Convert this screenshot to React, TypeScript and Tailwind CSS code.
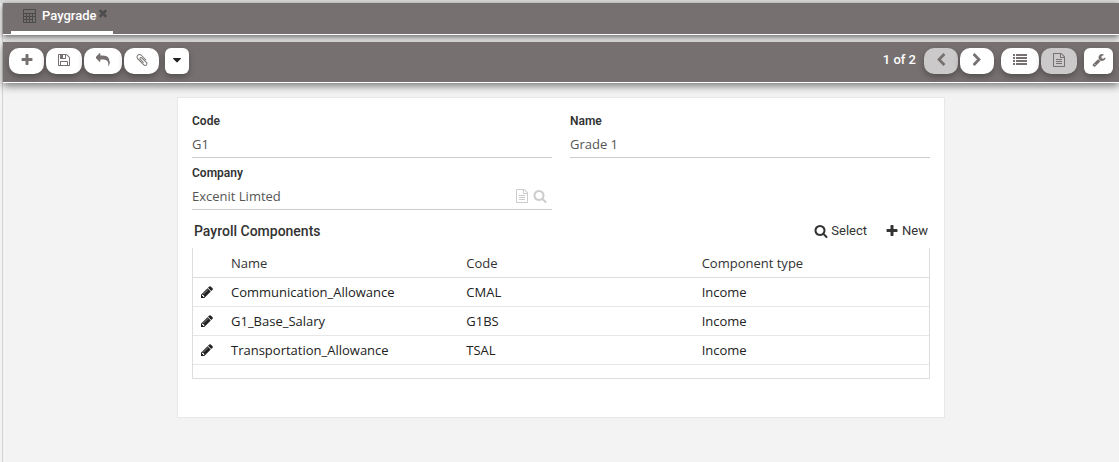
import React from "react";

const paths = {
  plus: "M1600 736v192q0 40-28 68t-68 28h-416v416q0 40-28 68t-68 28h-192q-40 0-68-28t-28-68v-416h-416q-40 0-68-28t-28-68v-192q0-40 28-68t68-28h416v-416q0-40 28-68t68-28h192q40 0 68 28t28 68v416h416q40 0 68 28t28 68z",
  search:
    "M1216 832q0-185-131.5-316.5t-316.5-131.5-316.5 131.5-131.5 316.5 131.5 316.5 316.5 131.5 316.5-131.5 131.5-316.5zm512 832q0 52-38 90t-90 38q-54 0-90-38l-343-342q-179 124-399 124-143 0-273.5-55.5t-225-150-150-225-55.5-273.5 55.5-273.5 150-225 225-150 273.5-55.5 273.5 55.5 225 150 150 225 55.5 273.5q0 220-124 399l343 343q37 37 37 90z",
  save: "M512 1536h768v-384h-768v384zm896 0h128v-896q0-14-10-38.5t-20-34.5l-281-281q-10-10-34-20t-39-10v416q0 40-28 68t-68 28h-576q-40 0-68-28t-28-68v-416h-128v1280h128v-416q0-40 28-68t68-28h832q40 0 68 28t28 68v416zm-384-928v-320q0-13-9.5-22.5t-22.5-9.5h-192q-13 0-22.5 9.5t-9.5 22.5v320q0 13 9.5 22.5t22.5 9.5h192q13 0 22.5-9.5t9.5-22.5zm640 32v928q0 40-28 68t-68 28h-1344q-40 0-68-28t-28-68v-1344q0-40 28-68t68-28h928q40 0 88 20t76 48l280 280q28 28 48 76t20 88z",
  pencil:
    "M491 1536l91-91-235-235-91 91v107h128v128h107zm523-928q0-22-22-22-10 0-17 7l-542 542q-7 7-7 17 0 22 22 22 10 0 17-7l542-542q7-7 7-17zm-54-192l416 416-832 832h-416v-416zm683 96q0 53-37 90l-166 166-416-416 166-165q36-38 90-38 53 0 91 38l235 234q37 39 37 91z",
  file: "M1596 380q28 28 48 76t20 88v1152q0 40-28 68t-68 28h-1344q-40 0-68-28t-28-68v-1600q0-40 28-68t68-28h896q40 0 88 20t76 48zm-444-244v376h376q-10-29-22-41l-313-313q-12-12-41-22zm384 1528v-1024h-416q-40 0-68-28t-28-68v-416h-768v1536h1280zm-1024-864q0-14 9-23t23-9h704q14 0 23 9t9 23v64q0 14-9 23t-23 9h-704q-14 0-23-9t-9-23v-64zm736 224q14 0 23 9t9 23v64q0 14-9 23t-23 9h-704q-14 0-23-9t-9-23v-64q0-14 9-23t23-9h704zm0 256q14 0 23 9t9 23v64q0 14-9 23t-23 9h-704q-14 0-23-9t-9-23v-64q0-14 9-23t23-9h704z",
  left: "M1427 301l-531 531 531 531q19 19 19 45t-19 45l-166 166q-19 19-45 19t-45-19l-742-742q-19-19-19-45t19-45l742-742q19-19 45-19t45 19l166 166q19 19 19 45t-19 45z",
  right:
    "M1363 877l-742 742q-19 19-45 19t-45-19l-166-166q-19-19-19-45t19-45l531-531-531-531q-19-19-19-45t19-45l166-166q19-19 45-19t45 19l742 742q19 19 19 45t-19 45z",
  close:
    "M1490 1322q0 40-28 68l-136 136q-28 28-68 28t-68-28l-294-294-294 294q-28 28-68 28t-68-28l-136-136q-28-28-28-68t28-68l294-294-294-294q-28-28-28-68t28-68l136-136q28-28 68-28t68 28l294 294 294-294q28-28 68-28t68 28l136 136q28 28 28 68t-28 68l-294 294 294 294q28 28 28 68z",
  wrench:
    "M448 1472q0-26-19-45t-45-19-45 19-19 45 19 45 45 19 45-19 19-45zm644-420l-682 682q-37 37-90 37-52 0-91-37l-106-108q-38-36-38-90 0-53 38-91l681-681q39 98 114.5 173.5t173.5 114.5zm634-435q0 39-23 106-47 134-164.5 217.5t-258.5 83.5q-185 0-316.5-131.5t-131.5-316.5 131.5-316.5 316.5-131.5q58 0 121.5 16.5t107.5 46.5q16 11 16 28t-16 28l-293 169v224l193 107q5-3 79-48.5t135.5-81 70.5-35.5q15 0 23.5 10t8.5 25z",
  reply:
    "M1792 1120q0 166-127 451-3 7-10.5 24t-13.5 30-13 22q-12 17-28 17-15 0-23.5-10t-8.5-25q0-9 2.5-26.5t2.5-23.5q5-68 5-123 0-112-19.5-200.5t-54-153.5-90-112-117.5-78-149-49.5-171.5-24.5-197.5-7h-224v256q0 26-19 45t-45 19-45-19l-512-512q-19-19-19-45t19-45l512-512q19-19 45-19t45 19 19 45v256h224q713 0 875 403 53 134 53 333z",
  clip: "M1596 1385q0 117-79 196t-196 79q-135 0-235-100l-777-776q-113-115-113-271 0-159 110-270t269-111q158 0 273 113l605 606q10 10 10 22 0 16-30.5 46.5t-46.5 30.5q-13 0-23-10l-606-607q-79-77-181-77-106 0-179 75t-73 181q0 105 76 181l776 777q63 63 145 63 64 0 106-42t42-106q0-82-63-145l-581-581q-26-24-60-24-29 0-48 19t-19 48q0 32 25 59l410 410q10 10 10 22 0 16-31 47t-47 31q-12 0-22-10l-410-410q-63-61-63-149 0-82 57-139t139-57q88 0 149 63l581 581q100 98 100 235z",
  list: "M0 128h256v256h-256zM384 128h1408v256h-1408zM0 512h256v256h-256zM384 512h1408v256h-1408zM0 896h256v256h-256zM384 896h1408v256h-1408zM0 1280h256v256h-256zM384 1280h1408v256h-1408z",
  caret: "M1408 704q0 26-19 45l-448 448q-19 19-45 19t-45-19l-448-448q-19-19-19-45t19-45 45-19h896q26 0 45 19t19 45z",
};

type IconName = keyof typeof paths;

function Icon({ name, className = "size-3.5" }: { name: IconName; className?: string }) {
  return (
    <svg viewBox="0 0 1792 1792" className={`${className} shrink-0`} fill="currentColor" aria-hidden="true">
      <path d={paths[name]} />
    </svg>
  );
}

function CalculatorIcon() {
  return (
    <svg viewBox="0 0 14 14" className="size-3.5 shrink-0" aria-hidden="true">
      <path
        fill="currentColor"
        fillRule="evenodd"
        d="M.8 0h11.4q.8 0 .8.8v12.4q0 .8-.8.8H.8q-.8 0-.8-.8V.8Q0 0 .8 0zM1 1v3h11V1zM1 5v2h2V5zM4 5v2h2V5zM7 5v2h2V5zM10 5v2h2V5zM1 8v2h2V8zM4 8v2h2V8zM7 8v2h2V8zM10 8v5h2V8zM1 11v2h2v-2zM4 11v2h2v-2zM7 11v2h2v-2z"
      />
    </svg>
  );
}

function ToolButton({
  icon,
  label,
  className,
}: {
  icon: IconName;
  label: string;
  className: string;
}) {
  return (
    <button
      type="button"
      aria-label={label}
      className={`flex h-[26px] items-center justify-center pb-0.5 shadow-[0_3px_6px_rgba(0,0,0,0.3)] ${className}`}
    >
      <Icon name={icon} />
    </button>
  );
}

function Field({ id, label, value, children }: { id: string; label: string; value: string; children?: React.ReactNode }) {
  return (
    <div className="flex h-[52px] flex-col">
      <label htmlFor={id} className="font-[Roboto,sans-serif] text-xs leading-5 font-semibold text-[#333]">
        {label}
      </label>
      <div className="flex h-[27px] items-center border-b border-[#ccc]">
        <input
          id={id}
          defaultValue={value}
          className="min-w-0 flex-1 bg-transparent text-[13px] leading-5 text-[#555] outline-none"
        />
        {children}
      </div>
    </div>
  );
}

const rows = [
  ["Communication_Allowance", "CMAL", "Income"],
  ["G1_Base_Salary", "G1BS", "Income"],
  ["Transportation_Allowance", "TSAL", "Income"],
];

export default function App() {
  return (
    <div className="min-h-screen bg-[#dcdcdc] pt-[3px] font-['Open_Sans',sans-serif]">
      <div className="min-h-[calc(100vh-3px)] border-l-2 border-[#f3f3f3] bg-[#f3f3f3]">
        <div className="min-h-[calc(100vh-3px)] border-l border-[#d2d2d2]">
          <nav className="flex h-8 border-b border-white bg-[#777070] px-2 shadow-[0_2px_6px_rgba(0,0,0,0.6)]">
            <div className="flex h-[31px] items-start border-b-3 border-white pr-1 pl-3">
              <a
                href="#paygrade"
                className="flex items-center pt-[3px] font-[Roboto,sans-serif] text-[13px] leading-5 font-medium text-white"
              >
                <span className="mr-[5px] text-[#4b4b4b]">
                  <CalculatorIcon />
                </span>
                Paygrade
              </a>
              <button type="button" aria-label="Close tab" className="mt-1 ml-px text-[#4b4b4b]">
                <Icon name="close" className="size-3" />
              </button>
            </div>
          </nav>
          <header className="mt-[7px] flex h-[41px] items-center border-b border-white bg-[#777070] px-1.5 pb-0.5 text-[#777070] shadow-[0_3px_8px_rgba(0,0,0,0.5)]">
            <div className="flex gap-0.5">
              <ToolButton icon="plus" label="New" className="w-[35px] rounded-[10px] bg-white" />
              <ToolButton icon="save" label="Save" className="w-9 rounded-[10px] bg-white" />
              <ToolButton icon="reply" label="Undo" className="w-[38px] rounded-[10px] bg-white" />
              <ToolButton icon="clip" label="Attach" className="w-[35px] rounded-[10px] bg-white" />
            </div>
            <ToolButton icon="caret" label="More" className="ml-1.5 w-6 rounded-md bg-white text-[#222]" />
            <span className="mr-2 ml-auto pb-0.5 font-[Roboto,sans-serif] text-[13px] leading-5 font-medium text-white">
              1 of 2
            </span>
            <div className="flex gap-0.5">
              <ToolButton icon="left" label="Previous" className="w-[34px] rounded-[10px] bg-[#cbc9c9]" />
              <ToolButton icon="right" label="Next" className="w-[34px] rounded-[10px] bg-white" />
            </div>
            <div className="ml-[7px] flex gap-0.5">
              <ToolButton icon="list" label="List view" className="w-[38px] rounded-[10px] bg-white" />
              <ToolButton icon="file" label="Form view" className="w-9 rounded-[10px] bg-[#cbc9c9]" />
            </div>
            <ToolButton icon="wrench" label="Settings" className="ml-[7px] w-[29px] rounded-md bg-white" />
          </header>
          <main className="px-[174px] pt-[14px] pb-11">
            <section className="border border-[#e7e7e7] bg-white px-3.5 pt-[13px] pb-[38px]">
              <form className="grid grid-cols-2 gap-x-[18px]">
                <Field id="code" label="Code" value="G1" />
                <Field id="name" label="Name" value="Grade 1" />
                <Field id="company" label="Company" value="Excenit Limted">
                  <div className="flex gap-1 pr-[5px] text-[#ccc]">
                    <button type="button" aria-label="Open company">
                      <Icon name="file" />
                    </button>
                    <button type="button" aria-label="Search company">
                      <Icon name="search" />
                    </button>
                  </div>
                </Field>
              </form>
              <div className="flex h-[33px] items-center px-0.5 pb-px font-[Roboto,sans-serif] text-[#333]">
                <h2 className="mr-auto text-sm leading-5 font-medium">Payroll Components</h2>
                <button type="button" className="flex items-center gap-[3px] text-[13px] leading-5">
                  <Icon name="search" />
                  Select
                </button>
                <button type="button" className="ml-[18px] flex items-center gap-[3px] text-[13px] leading-5">
                  <Icon name="plus" />
                  New
                </button>
              </div>
              <div className="border-x border-b border-[#ddd] pb-[13px]">
                <table className="w-full table-fixed text-left text-[13px] leading-5 text-[#222]">
                  <thead>
                    <tr className="h-[29px] border-b border-[#ddd] text-[#333]">
                      <th className="w-[30px]" aria-label="Edit" />
                      <th className="px-2 pt-0.5 font-medium">Name</th>
                      <th className="px-2 pt-0.5 font-medium">Code</th>
                      <th className="px-2 pt-0.5 font-medium">Component type</th>
                    </tr>
                  </thead>
                  <tbody>
                    {rows.map(([name, code, type]) => (
                      <tr key={name} className="h-[29px] border-b border-[#e7e7e7]">
                        <td className="pl-[7px]">
                          <button type="button" aria-label={`Edit ${name}`} className="block">
                            <Icon name="pencil" />
                          </button>
                        </td>
                        <td className="px-2">{name}</td>
                        <td className="px-2">{code}</td>
                        <td className="px-2">{type}</td>
                      </tr>
                    ))}
                  </tbody>
                </table>
              </div>
            </section>
          </main>
        </div>
      </div>
    </div>
  );
}
